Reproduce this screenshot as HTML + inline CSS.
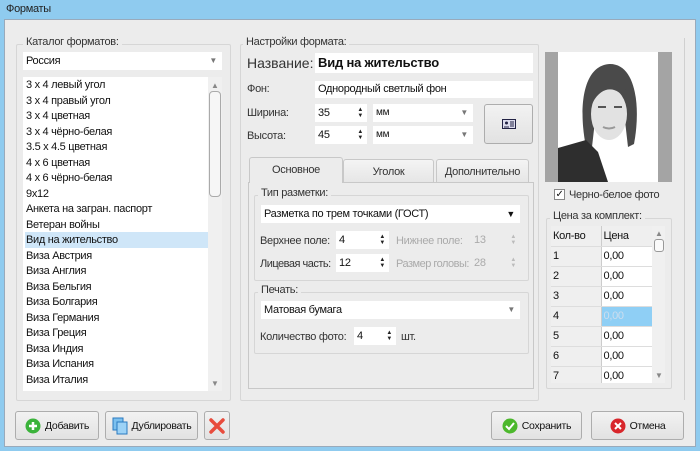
<!DOCTYPE html>
<html><head><meta charset="utf-8"><style>
*{box-sizing:border-box;margin:0;padding:0}
body{width:700px;height:451px;overflow:hidden;background:#8fcbef;font-family:"Liberation Sans","DejaVu Sans",sans-serif;font-size:11px;letter-spacing:-0.3px;color:#111;position:relative}
.a{position:absolute}
.win{left:4px;top:19px;width:692px;height:428px;background:#ececec;border:1px solid #9ab}
.grp{position:absolute;border:1px solid #d6d6d6;border-radius:2px}
.gl{position:absolute;background:#ececec;padding:0 3px;color:#333}
.in{position:absolute;background:#fff;height:18px;line-height:18px;padding-left:3px}
.arr{position:absolute;right:5px;top:0;color:#777;font-size:8px}
.spin{position:absolute;right:4px;top:3px;font-size:6px;line-height:6px;color:#222}
.lbl{position:absolute;color:#333;white-space:nowrap}
.dis{color:#aaa}
.btn{position:absolute;border:1px solid #adadad;border-radius:3px;background:linear-gradient(#f2f2f2,#e2e2e2);display:flex;align-items:center;justify-content:center;gap:4px;font-size:10.5px}
.li{position:absolute;left:2px;height:15.5px;line-height:15.5px;width:183px;padding-left:1px}
.tab{position:absolute;top:157px;height:26px;border:1px solid #c8c8c8;background:linear-gradient(#f4f4f4,#e6e6e6);text-align:center;line-height:24px;border-radius:3px 3px 0 0;color:#333}
td{height:20px;border-bottom:1px solid #ddd;padding-left:2px}
</style></head><body>
<div class="a" style="left:6px;top:3px;color:#222">Форматы</div>
<div class="a win"></div>

<div class="grp" style="left:16px;top:44px;width:215px;height:357px"></div>
<div class="gl" style="left:23px;top:36px">Каталог форматов:</div>
<div class="in" style="left:23px;top:52px;width:199px">Россия<span class="arr">▼</span></div>
<div class="a" style="left:23px;top:77px;width:199px;height:314px;background:#fff;overflow:hidden">
<div class="li" style="top:155px;background:#cfe6f8;width:183px"></div>
<div class="li" style="top:1px">3 x 4 левый угол</div>
<div class="li" style="top:16.5px">3 x 4 правый угол</div>
<div class="li" style="top:32px">3 x 4 цветная</div>
<div class="li" style="top:47.5px">3 x 4 чёрно-белая</div>
<div class="li" style="top:63px">3.5 x 4.5 цветная</div>
<div class="li" style="top:78.5px">4 x 6 цветная</div>
<div class="li" style="top:94px">4 x 6 чёрно-белая</div>
<div class="li" style="top:109.5px">9x12</div>
<div class="li" style="top:125px">Анкета на загран. паспорт</div>
<div class="li" style="top:140.5px">Ветеран войны</div>
<div class="li" style="top:156px">Вид на жительство</div>
<div class="li" style="top:171.5px">Виза Австрия</div>
<div class="li" style="top:187px">Виза Англия</div>
<div class="li" style="top:202.5px">Виза Бельгия</div>
<div class="li" style="top:218px">Виза Болгария</div>
<div class="li" style="top:233.5px">Виза Германия</div>
<div class="li" style="top:249px">Виза Греция</div>
<div class="li" style="top:264.5px">Виза Индия</div>
<div class="li" style="top:280px">Виза Испания</div>
<div class="li" style="top:295.5px">Виза Италия</div>
<div class="a" style="left:185px;top:0;width:14px;height:314px;background:#f0f0f0"></div>
<div class="a" style="left:188px;top:4px;font-size:8px;color:#888">▲</div>
<div class="a" style="left:186px;top:14px;width:12px;height:106px;border:1px solid #aaa;border-radius:4px;background:#f6f6f6"></div>
<div class="a" style="left:188px;top:302px;font-size:8px;color:#888">▼</div>
</div>

<div class="grp" style="left:240px;top:44px;width:299px;height:357px"></div>
<div class="gl" style="left:243px;top:36px">Настройки формата:</div>
<div class="lbl" style="left:247px;top:55px;font-size:14px;letter-spacing:0">Название:</div>
<div class="in" style="left:315px;top:53px;width:218px;height:20px;font-weight:bold;font-size:13px;line-height:20px;letter-spacing:-0.2px">Вид на жительство</div>
<div class="lbl" style="left:247px;top:83px">Фон:</div>
<div class="in" style="left:315px;top:81px;width:218px;height:17px;line-height:17px">Однородный светлый фон</div>
<div class="lbl" style="left:247px;top:107px">Ширина:</div>
<div class="in" style="left:315px;top:104px;width:52px">35<span class="spin">▲<br>▼</span></div>
<div class="in" style="left:373px;top:104px;width:100px;font-size:10px">мм<span class="arr">▼</span></div>
<div class="lbl" style="left:247px;top:130px">Высота:</div>
<div class="in" style="left:315px;top:126px;width:52px">45<span class="spin">▲<br>▼</span></div>
<div class="in" style="left:373px;top:126px;width:100px;font-size:10px">мм<span class="arr">▼</span></div>
<div class="btn" style="left:484px;top:104px;width:49px;height:40px"><svg width="14" height="10"><rect x=".5" y=".5" width="13" height="9" fill="#dde" stroke="#224"/><circle cx="4.5" cy="4" r="1.5" fill="#224"/><path d="M2 8h5M8 3h4M8 5h4M8 7h4" stroke="#224"/></svg></div>

<div class="a" style="left:248px;top:182px;width:286px;height:207px;border:1px solid #c8c8c8;background:#ececec"></div>
<div class="tab" style="left:343px;width:91px;top:159px;height:24px">Уголок</div>
<div class="tab" style="left:436px;width:93px;top:159px;height:24px">Дополнительно</div>
<div class="tab" style="left:249px;width:94px;background:#ececec;border-bottom:none;height:26px">Основное</div>

<div class="grp" style="left:254px;top:195px;width:275px;height:86px"></div>
<div class="gl" style="left:258px;top:187px">Тип разметки:</div>
<div class="in" style="left:261px;top:205px;width:259px">Разметка по трем точками (ГОСТ)<span class="arr" style="color:#111;font-size:9px">▼</span></div>
<div class="lbl" style="left:260px;top:235px">Верхнее поле:</div>
<div class="in" style="left:336px;top:231px;width:53px">4<span class="spin">▲<br>▼</span></div>
<div class="lbl dis" style="left:396px;top:235px">Нижнее поле:</div>
<div class="in dis" style="left:471px;top:231px;width:49px;background:#ececec">13<span class="spin" style="color:#bbb">▲<br>▼</span></div>
<div class="lbl" style="left:260px;top:258px;letter-spacing:-0.5px">Лицевая часть:</div>
<div class="in" style="left:336px;top:254px;width:53px">12<span class="spin">▲<br>▼</span></div>
<div class="lbl dis" style="left:396px;top:258px;letter-spacing:-0.5px">Размер головы:</div>
<div class="in dis" style="left:471px;top:254px;width:49px;background:#ececec">28<span class="spin" style="color:#bbb">▲<br>▼</span></div>

<div class="grp" style="left:254px;top:292px;width:275px;height:62px"></div>
<div class="gl" style="left:258px;top:284px">Печать:</div>
<div class="in" style="left:261px;top:301px;width:259px">Матовая бумага<span class="arr">▼</span></div>
<div class="lbl" style="left:260px;top:331px">Количество фото:</div>
<div class="in" style="left:354px;top:327px;width:42px">4<span class="spin">▲<br>▼</span></div>
<div class="lbl" style="left:401px;top:331px">шт.</div>

<div class="a" style="left:545px;top:52px;width:127px;height:130px;background:#a4a4a4"></div>
<svg class="a" style="left:558px;top:52px" width="100" height="130">
<rect width="100" height="130" fill="#fff"/>
<path d="M28 95 C20 55 25 13 52 12 C78 12 83 55 76 92 L70 95 L66 60 L38 60 L34 95 Z" fill="#4a4a4a"/>
<ellipse cx="51" cy="62" rx="18" ry="26" fill="#e2e2e2"/>
<path d="M34 38 C40 25 62 22 70 42 L68 48 C60 35 45 32 35 50 Z" fill="#4a4a4a"/>
<path d="M0 96 L28 88 L40 100 L50 130 L0 130 Z" fill="#2e2e2e"/>
<path d="M55 130 C60 110 80 95 100 92 L100 130 Z" fill="#fff"/>
<path d="M40 55h8M56 55h8" stroke="#555" stroke-width="2"/>
<path d="M45 75q6 3 12 0" stroke="#999" stroke-width="2" fill="none"/>
</svg>
<div class="a" style="left:684px;top:38px;width:1px;height:362px;background:#d0d0d0"></div>

<div class="a" style="left:554px;top:189px;width:11px;height:11px;border:1px solid #888;background:#fff;font-size:10px;line-height:9px;text-align:center">✓</div>
<div class="lbl" style="left:569px;top:189px">Черно-белое фото</div>

<div class="grp" style="left:546px;top:218px;width:126px;height:171px"></div>
<div class="gl" style="left:550px;top:210px">Цена за комплект:</div>
<div class="a" style="left:551px;top:226px;width:114px;height:157px;background:#fff;overflow:hidden">
<table style="border-collapse:collapse;width:101px;font-size:11px">
<tr style="background:#efefef"><td style="width:50px;border-right:1px solid #ccc">Кол-во</td><td>Цена</td></tr>
<tr><td style="background:#efefef;border-right:1px solid #ccc">1</td><td>0,00</td></tr>
<tr><td style="background:#efefef;border-right:1px solid #ccc">2</td><td>0,00</td></tr>
<tr><td style="background:#efefef;border-right:1px solid #ccc">3</td><td>0,00</td></tr>
<tr><td style="background:#efefef;border-right:1px solid #ccc">4</td><td style="background:#8fcff5;color:#cde">0,00</td></tr>
<tr><td style="background:#efefef;border-right:1px solid #ccc">5</td><td>0,00</td></tr>
<tr><td style="background:#efefef;border-right:1px solid #ccc">6</td><td>0,00</td></tr>
<tr><td style="background:#efefef;border-right:1px solid #ccc">7</td><td>0,00</td></tr>
</table>
<div class="a" style="left:101px;top:0;width:13px;height:157px;background:#f0f0f0"></div>
<div class="a" style="left:104px;top:3px;font-size:8px;color:#888">▲</div>
<div class="a" style="left:103px;top:13px;width:10px;height:13px;border:1px solid #999;border-radius:3px;background:#fafafa"></div>
<div class="a" style="left:104px;top:145px;font-size:8px;color:#888">▼</div>
</div>

<div class="btn" style="left:15px;top:411px;width:84px;height:29px"><svg width="16" height="16"><circle cx="8" cy="8" r="7.5" fill="#3bb33b"/><path d="M8 4v8M4 8h8" stroke="#fff" stroke-width="2.5"/></svg>Добавить</div>
<div class="btn" style="left:105px;top:411px;width:93px;height:29px"><svg width="16" height="18"><rect x="1" y="1" width="10" height="12" fill="#7cc0ee" stroke="#2a7ac0"/><rect x="5" y="5" width="10" height="12" fill="#9cd2f6" stroke="#2a7ac0"/></svg>Дублировать</div>
<div class="btn" style="left:204px;top:411px;width:26px;height:29px"><svg width="16" height="16"><path d="M2 2L14 14M14 2L2 14" stroke="#e84c3d" stroke-width="3.5" stroke-linecap="round"/></svg></div>
<div class="btn" style="left:491px;top:411px;width:91px;height:29px"><svg width="16" height="16"><circle cx="8" cy="8" r="7.5" fill="#4cb82c"/><path d="M4 8l3 3 5-6" stroke="#fff" stroke-width="2" fill="none"/></svg>Сохранить</div>
<div class="btn" style="left:591px;top:411px;width:93px;height:29px"><svg width="16" height="16"><circle cx="8" cy="8" r="7.5" fill="#d8262b"/><path d="M5 5l6 6M11 5l-6 6" stroke="#fff" stroke-width="2"/></svg>Отмена</div>
</body></html>
